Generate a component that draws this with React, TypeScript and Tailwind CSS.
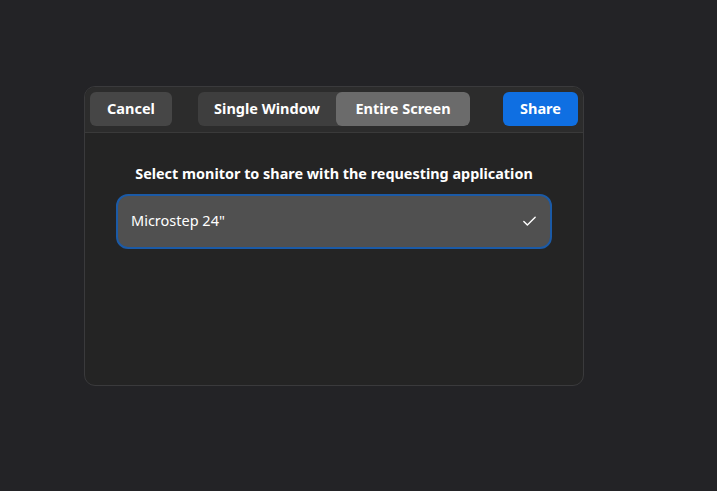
import React, { useState } from 'react';
import { Check } from 'lucide-react';

const font = { fontFamily: '"Noto Sans", "DejaVu Sans", sans-serif' };

export default function App() {
  const [mode, setMode] = useState<'window' | 'screen'>('screen');

  return (
    <div className="h-[491px] w-[717px] bg-[#232326] pt-[86px] pl-[84px]" style={font}>
      <div className="flex h-[300px] w-[500px] flex-col overflow-hidden rounded-[11px] border border-[#3a3a3c] bg-[#242424]">
        {/* Header bar */}
        <div className="flex h-[46px] items-start border-b border-[#3a3a3a] bg-[#2c2c2c] px-[5px] pt-[5px]">
          <button className="h-[34px] w-[82px] rounded-[6px] bg-[#464646] text-[14.5px] font-bold text-white">
            Cancel
          </button>
          <div className="ml-[26px] flex h-[34px] overflow-hidden rounded-[6px] bg-[#3e3e3e]">
            <button
              onClick={() => setMode('window')}
              className={`w-[138px] text-[14.5px] font-bold text-white ${mode === 'window' ? 'bg-[#6b6b6b]' : ''}`}
            >
              Single Window
            </button>
            <button
              onClick={() => setMode('screen')}
              className={`w-[134px] rounded-[6px] text-[14.5px] font-bold text-white ${mode === 'screen' ? 'bg-[#6b6b6b]' : ''}`}
            >
              Entire Screen
            </button>
          </div>
          <button className="ml-auto h-[34px] w-[75px] rounded-[6px] bg-[#0f6fe2] text-[14.5px] font-bold text-white">
            Share
          </button>
        </div>

        {/* Body */}
        <div className="flex flex-col items-center px-[31px] pt-[30px]">
          <p className="text-[14.4px] font-bold text-white">Select monitor to share with the requesting application</p>
          <div className="mt-[9px] flex h-[55px] w-full items-center justify-between rounded-[12px] border-2 border-[#1b5aa6] bg-[#505050] pl-[13px] pr-[12px]">
            <span className="text-[14.5px] text-white">Microstep 24"</span>
            <Check className="h-[17px] w-[17px] text-white" strokeWidth={2} />
          </div>
        </div>
      </div>
    </div>
  );
}
